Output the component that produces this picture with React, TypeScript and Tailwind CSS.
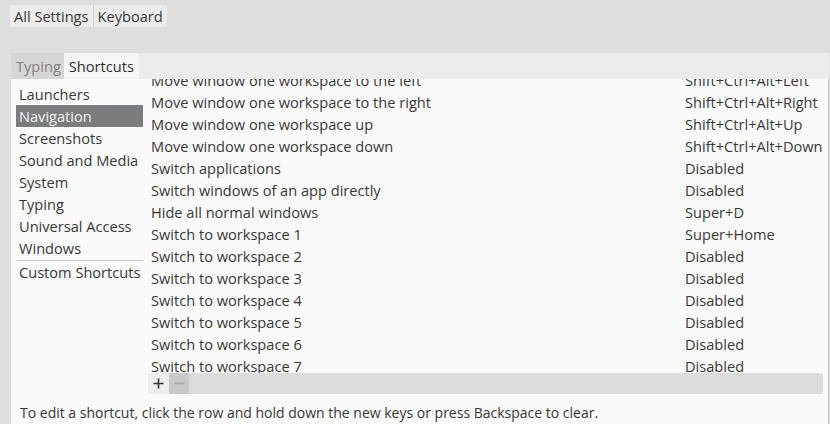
import React from "react";

const cats = ["Launchers", "Navigation", "Screenshots", "Sound and Media", "System", "Typing", "Universal Access", "Windows"];

const rows: [string, string][] = [
  ["Move window one workspace to the left", "Shift+Ctrl+Alt+Left"],
  ["Move window one workspace to the right", "Shift+Ctrl+Alt+Right"],
  ["Move window one workspace up", "Shift+Ctrl+Alt+Up"],
  ["Move window one workspace down", "Shift+Ctrl+Alt+Down"],
  ["Switch applications", "Disabled"],
  ["Switch windows of an app directly", "Disabled"],
  ["Hide all normal windows", "Super+D"],
  ["Switch to workspace 1", "Super+Home"],
  ["Switch to workspace 2", "Disabled"],
  ["Switch to workspace 3", "Disabled"],
  ["Switch to workspace 4", "Disabled"],
  ["Switch to workspace 5", "Disabled"],
  ["Switch to workspace 6", "Disabled"],
  ["Switch to workspace 7", "Disabled"],
  ["Switch to workspace 8", "Disabled"],
];

export default function App() {
  return (
    <div
      className="w-[830px] h-[424px] overflow-hidden bg-[#dedede] text-[14.6px] text-[#383838] flex flex-col"
      style={{ fontFamily: '"Open Sans", "Noto Sans", sans-serif' }}
    >
      <div className="h-[53px] shrink-0 pl-[10px] pt-[5px]">
        <div className="flex h-[22px] bg-[#ececec] w-fit rounded-[2px] leading-[22px]">
          <div className="px-[4px] border-r border-[#d0d0d0]">All Settings</div>
          <div className="px-[4px]">Keyboard</div>
        </div>
      </div>
      <div className="flex-1 flex flex-col ml-[11px] mr-[1px] min-h-0">
        <div className="h-[26px] shrink-0 bg-[#ececec] flex leading-[26px]">
          <div className="pl-[5px] pr-[3px] bg-[#d6d6d6] text-[#818181]">Typing</div>
          <div className="px-[5px] bg-[#f6f6f6] text-[#2e2e2e]">Shortcuts</div>
        </div>
        <div className="flex-1 bg-[#fafafa] border-r border-[#c8c8c8] flex flex-col min-h-0">
          <div className="flex h-[294px] shrink-0">
            <div className="w-[132px] shrink-0 pl-[5px] pt-[4px]">
              {cats.map((c) => (
                <div
                  key={c}
                  className={
                    "h-[22px] leading-[22px] pl-[3px] whitespace-nowrap " +
                    (c === "Navigation" ? "bg-[#7b7c7e] text-[#f2f2f2]" : "")
                  }
                >
                  {c}
                </div>
              ))}
              <div className="h-[1px] bg-[#c8c8c8] ml-[1px] mt-[1px]" />
              <div className="h-[22px] leading-[22px] pl-[3px] whitespace-nowrap">Custom Shortcuts</div>
            </div>
            <div className="flex-1 overflow-hidden pl-[8px] pr-[4px]">
              <div className="mt-[-10px]">
                {rows.map(([n, a]) => (
                  <div key={n} className="flex h-[22px] leading-[22px] whitespace-nowrap">
                    <div className="w-[534px] shrink-0">{n}</div>
                    <div>{a}</div>
                  </div>
                ))}
              </div>
            </div>
          </div>
          <div className="flex h-[21px] ml-[137px] mr-[5px] bg-[#dcdcdc] rounded-[2px] shrink-0">
            <div className="w-[21px] h-[21px] bg-[#ededed] rounded-l-[2px] flex items-center justify-center">
              <svg width="11" height="11" viewBox="0 0 11 11">
                <path d="M5.5 0.5v10M0.5 5.5h10" stroke="#333" strokeWidth="1.6" />
              </svg>
            </div>
            <div className="w-[20px] h-[21px] bg-[#c9c9c9] flex items-center justify-center">
              <svg width="11" height="11" viewBox="0 0 11 11">
                <path d="M0.5 5.5h10" stroke="#a8a8a8" strokeWidth="1.6" />
              </svg>
            </div>
          </div>
          <div className="pl-[9px] mt-[8px] leading-[22px] whitespace-nowrap text-[14px]">
            To edit a shortcut, click the row and hold down the new keys or press Backspace to clear.
          </div>
        </div>
      </div>
    </div>
  );
}
